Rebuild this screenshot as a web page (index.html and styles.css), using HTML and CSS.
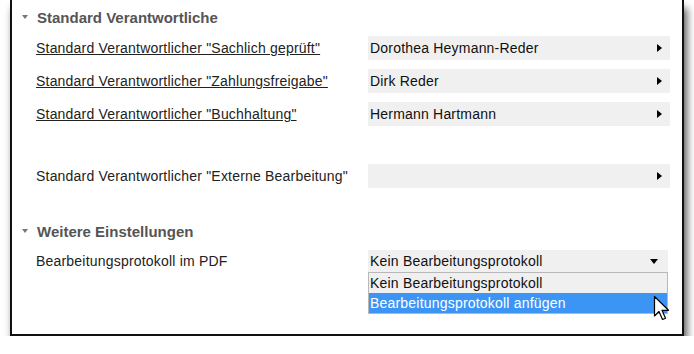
FILE: index.html
```html
<!DOCTYPE html>
<html lang="de">
<head>
    <meta charset="utf-8" />
    <title>Einstellungen</title>
    <link rel="stylesheet" href="styles.css">
</head>
<body>
    <div class="window">
        <div class="section-head"><span class="caret"></span>Standard Verantwortliche</div>
        <div class="row">
            <a class="label link">Standard Verantwortlicher "Sachlich geprüft"</a>
            <div class="field"><span>Dorothea Heymann-Reder</span><i class="arrow-right"></i></div>
        </div>
        <div class="row">
            <a class="label link">Standard Verantwortlicher "Zahlungsfreigabe"</a>
            <div class="field"><span>Dirk Reder</span><i class="arrow-right"></i></div>
        </div>
        <div class="row">
            <a class="label link">Standard Verantwortlicher "Buchhaltung"</a>
            <div class="field"><span>Hermann Hartmann</span><i class="arrow-right"></i></div>
        </div>
        <div class="row row-extern">
            <span class="label">Standard Verantwortlicher "Externe Bearbeitung"</span>
            <div class="field"><span></span><i class="arrow-right"></i></div>
        </div>
        <div class="section-head head-2"><span class="caret"></span>Weitere Einstellungen</div>
        <div class="row row-select">
            <span class="label">Bearbeitungsprotokoll im PDF</span>
            <div class="select-wrap">
                <div class="field select"><span>Kein Bearbeitungsprotokoll</span><i class="arrow-down"></i></div>
                <ul class="options">
                    <li class="option current">Kein Bearbeitungsprotokoll</li>
                    <li class="option hover">Bearbeitungsprotokoll anfügen</li>
                </ul>
                <svg class="cursor" width="18" height="28" viewBox="0 0 18 28">
                    <path d="M1.5 1.5 L1.5 21 L6 16.5 L9.5 24.5 L12.5 23.2 L9 15.3 L15.5 15.3 Z" fill="#fff" stroke="#000" stroke-width="1.2" stroke-linejoin="round"/>
                </svg>
            </div>
        </div>
    </div>
</body>
</html>
```

FILE: styles.css
```css
html,
body {
    margin: 0;
    background: #fff;
}

body {
    font-family: "Liberation Sans", Arial, sans-serif;
    font-size: 14px;
    letter-spacing: 0.2px;
    color: #222;
}

.window {
    margin-left: 10px;
    width: 674px;
    height: 336px;
    border: 2px solid #111;
    border-top: none;
    background: #fff;
    box-shadow: 3px 8px 8px rgba(0, 0, 0, 0.65);
    padding-top: 7px;
    box-sizing: border-box;
}

.section-head {
    display: flex;
    align-items: center;
    height: 20px;
    padding-left: 10px;
    font-weight: bold;
    font-size: 15px;
    letter-spacing: 0;
    color: #555;
    margin-bottom: 9px;
}

.head-2 {
    margin-top: 33px;
}

.caret {
    width: 0;
    height: 0;
    border-left: 3.5px solid transparent;
    border-right: 3.5px solid transparent;
    border-top: 4px solid #777;
    margin-right: 9px;
}

.row {
    display: flex;
    align-items: center;
    height: 24px;
    margin-bottom: 9px;
    padding-left: 24px;
}

.row-extern {
    margin-top: 38px;
}

.label {
    width: 332px;
    flex: none;
    color: #222;
}

.link {
    text-decoration: underline;
}

.field {
    width: 302px;
    height: 24px;
    background: #f0f0f0;
    display: flex;
    align-items: center;
    justify-content: space-between;
    padding: 0 8px 0 2px;
    box-sizing: border-box;
    color: #111;
}

.arrow-right {
    width: 0;
    height: 0;
    border-top: 4px solid transparent;
    border-bottom: 4px solid transparent;
    border-left: 5px solid #000;
}

.row-select {
    height: 22px;
    align-items: flex-start;
}

.row-select .label {
    line-height: 22px;
}

.select-wrap {
    position: relative;
    width: 300px;
}

.select {
    width: 300px;
    height: 22px;
    padding-right: 10px;
}

.arrow-down {
    width: 0;
    height: 0;
    border-left: 4px solid transparent;
    border-right: 4px solid transparent;
    border-top: 5px solid #000;
}

.options {
    list-style: none;
    margin: 0;
    padding: 0;
    border: 1px solid #b8b8b8;
    width: 298px;
}

.option {
    height: 20px;
    line-height: 20px;
    padding-left: 1px;
    color: #111;
}

.current {
    background: #f0f0f0;
}

.hover {
    background: #3c95f5;
    color: #fff;
}

.cursor {
    position: absolute;
    left: 285px;
    top: 45px;
}
```
